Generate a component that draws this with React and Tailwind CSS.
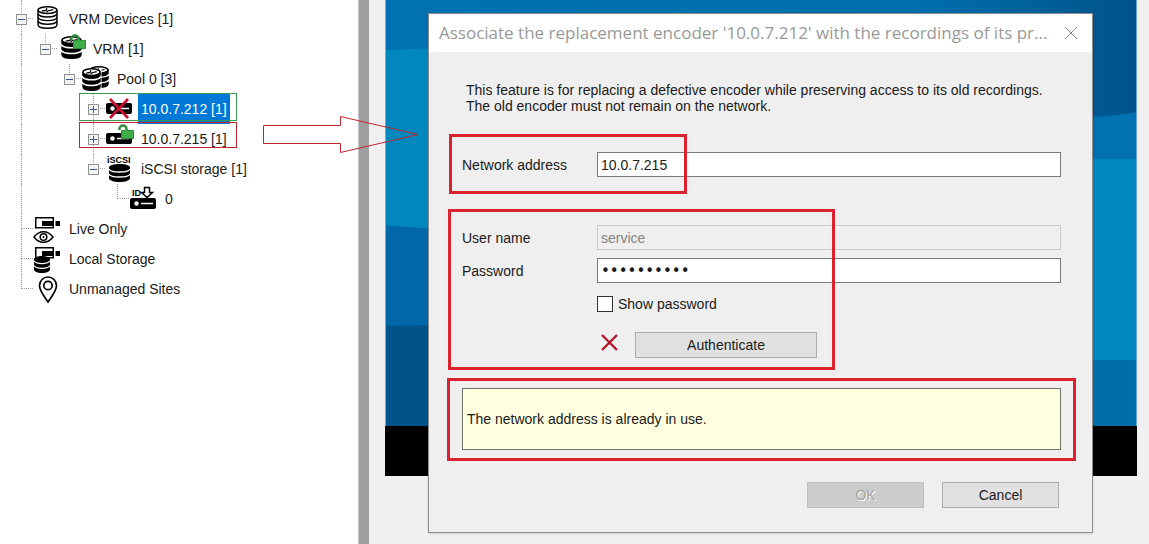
import React, { useState } from "react";

const Disks = ({ x, y, w = 20, h = 22, fill = "#000" }) => {
  const white = fill !== "#000";
  return (
    <svg x={x} y={y} width={w} height={h} viewBox="0 0 20 22" preserveAspectRatio="none">
      <path d="M1 4v14c0 2 4 3.300 9 3.300s9-1.300 9-3.300V4z" fill={fill} stroke="#000" strokeWidth="1.4" />
      {white ? (
        <path
          d="M1 7.500c1 2 4 3 9 3s8-1 9-3M1 11c1 2 4 3 9 3s8-1 9-3M1 14.500c1 2 4 3 9 3s8-1 9-3"
          fill="none"
          stroke="#000"
          strokeWidth="1.4"
        />
      ) : (
        <path
          d="M0 8c1 2.200 5 3.300 10 3.300S19 10.200 20 8M0 13.500c1 2.200 5 3.300 10 3.300s9-1.100 10-3.300"
          fill="none"
          stroke="#fff"
          strokeWidth="1.5"
        />
      )}
      <ellipse cx="10" cy="4" rx="9" ry="3.2" fill="#fff" stroke="#000" strokeWidth="1.5" />
      <path d="M4.500 5l4-.8 1-2M9 6l1.500-1.500 5-1" fill="none" stroke="#000" strokeWidth="1.2" />
    </svg>
  );
};

const SmallDisks = ({ x, y, w, h }) => (
  <svg x={x} y={y} width={w} height={h} viewBox="0 0 20 18" preserveAspectRatio="none">
    <path d="M0 3.500C0 1.500 4.500 0 10 0s10 1.500 10 3.500V14c0 2.500-4.500 4-10 4S0 16.500 0 14z" fill="#000" />
    <path
      d="M0 5c1 2 5 3 10 3s9-1 10-3M0 10c1 2 5 3 10 3s9-1 10-3"
      fill="none"
      stroke="#fff"
      strokeWidth="1.3"
    />
  </svg>
);

const Lock = ({ x, y }) => (
  <g transform={`translate(${x} ${y})`}>
    <path d="M1.500 6V4.500A3.500 3 0 0 1 8.500 4.500v3" fill="none" stroke="#2c8a3a" strokeWidth="2.4" />
    <path d="M3.500 6.500H7l1.500-1 1.500 1h5.500v8h-12z" fill="#3fae49" stroke="#2c8a3a" strokeWidth="1" />
  </g>
);

const Recorder = ({ x, y }) => (
  <g transform={`translate(${x} ${y})`}>
    <rect width="26" height="11" rx="2" fill="#000" />
    <circle cx="6.500" cy="5.500" r="2.200" fill="#fff" />
    <path d="M11 5.500h12" stroke="#fff" strokeWidth="1.5" />
  </g>
);

const Camera = () => (
  <g>
    <path d="M2.750 3.750h17.500v10H2.750z" fill="#fff" stroke="#000" strokeWidth="1.5" />
    <path d="M9 7h12v5H9zM22.500 7H27v5h-4.500z" fill="#000" />
  </g>
);

const icons = {
  devices: <Disks x={4} y={2} w={21} h={23} fill="#fff" />,
  vrm: (
    <>
      <Disks x={4} y={2} w={21} h={23} />
      <Lock x={13} y={0} />
    </>
  ),
  pool: (
    <>
      <Disks x={8} y={2} w={20} h={22} />
      <path d="M19.500 5v21" stroke="#fff" strokeWidth="2" />
      <Disks x={1} y={4} w={19} h={23} />
    </>
  ),
  lost: (
    <>
      <Recorder x={1} y={9} />
      <path d="M5 5l18 19M23 5L5 24" stroke="#c8102e" strokeWidth="2.7" />
    </>
  ),
  encoder: (
    <>
      <Recorder x={1} y={9} />
      <Lock x={13} y={0} />
    </>
  ),
  iscsi: (
    <>
      <text x="2" y="9" fontSize="9" fontWeight="bold">
        iSCSI
      </text>
      <SmallDisks x={4} y={10} w={21} h={18} />
    </>
  ),
  lun: (
    <>
      <text x="3" y="12" fontSize="9" fontWeight="bold">
        ID
      </text>
      <path d="M15.500 3.500h5v5h3L18 13.500l-5.500-5h3z" fill="#fff" stroke="#000" strokeWidth="1.5" />
      <Recorder x={1} y={14} />
    </>
  ),
  live: (
    <>
      <Camera />
      <path
        d="M1 23c3-4 6-5.300 9.500-5.300S17 19 20 23c-3 4-6 5.300-9.500 5.300S4 27 1 23z"
        fill="#fff"
        stroke="#000"
        strokeWidth="1.5"
      />
      <circle cx="10.500" cy="23" r="3.300" fill="none" stroke="#000" strokeWidth="1.500" />
      <circle cx="10.500" cy="23" r="1" fill="#000" />
    </>
  ),
  local: (
    <>
      <Camera />
      <SmallDisks x={1} y={12} w={16} h={17} />
    </>
  ),
  site: (
    <>
      <path
        d="M15 28C11 22 6.500 17 6.500 11.500a8.500 8.500 0 0 1 17 0C23.500 17 19 22 15 28z"
        fill="#fff"
        stroke="#000"
        strokeWidth="1.7"
      />
      <circle cx="15" cy="11.500" r="4.200" fill="#fff" stroke="#000" strokeWidth="1.700" />
    </>
  ),
};

// guides: one entry for each ancestor column, true where its line runs through
const nodes = [
  { label: "VRM Devices [1]", icon: "devices", guides: [], box: "-", down: true },
  { label: "VRM [1]", icon: "vrm", guides: [true], box: "-" },
  { label: "Pool 0 [3]", icon: "pool", guides: [true, false], box: "-" },
  { label: "10.0.7.212 [1]", icon: "lost", guides: [true, false, false], box: "+", down: true, mark: "green" },
  { label: "10.0.7.215 [1]", icon: "encoder", guides: [true, false, false], box: "+", down: true, mark: "red" },
  { label: "iSCSI storage [1]", icon: "iscsi", guides: [true, false, false], box: "-" },
  { label: "0", icon: "lun", guides: [true, false, false, false] },
  { label: "Live Only", icon: "live", guides: [], down: true },
  { label: "Local Storage", icon: "local", guides: [], down: true },
  { label: "Unmanaged Sites", icon: "site", guides: [] },
];

const Expander = ({ sign }) => (
  <button
    type="button"
    aria-label={sign === "+" ? "Expand" : "Collapse"}
    className="col-span-2 col-start-1 row-span-2 row-start-1 flex size-[11px] place-self-center border border-[#919191] bg-[#f3f3f3]"
  >
    <svg viewBox="0 0 9 9" className="size-[9px]">
      <path d={sign === "+" ? "M1 4.500h7M4.500 1v7" : "M1 4.500h7"} stroke="#3c5a96" strokeWidth="1" />
    </svg>
  </button>
);

const TreeRow = ({ node, selected, onSelect }) => {
  return (
    <li className="relative flex h-[30px] items-center pl-[9px]">
      {node.guides.map((line, i) => (
        <span key={i} className="h-full w-6 shrink-0 pl-3">
          {line && <span className="block h-full border-l border-dotted border-gray-400"></span>}
        </span>
      ))}
      <span className="grid h-full w-6 shrink-0 grid-cols-2 grid-rows-2">
        <span className="col-start-2 row-start-1 border-b border-l border-dotted border-gray-400"></span>
        {node.down && <span className="col-start-2 row-start-2 border-l border-dotted border-gray-400"></span>}
        {node.box && <Expander sign={node.box} />}
      </span>
      <svg viewBox="0 0 30 30" className="size-[30px] shrink-0 overflow-visible">
        {icons[node.icon]}
      </svg>
      <button
        type="button"
        onClick={onSelect}
        className={
          selected
            ? "ml-[3px] h-full bg-[#0078d7] px-[3px] whitespace-nowrap text-white"
            : "h-full px-1.5 whitespace-nowrap"
        }
      >
        {node.label}
      </button>
      {node.mark === "green" && (
        <span className="pointer-events-none absolute -top-px left-[79px] h-7 w-[158px] border border-[#3a9b52]"></span>
      )}
      {node.mark === "red" && (
        <span className="pointer-events-none absolute -top-0.5 left-[79px] h-[26px] w-[158px] border border-[#c1272d]"></span>
      )}
    </li>
  );
};

const Backdrop = () => (
  <svg viewBox="0 0 752 476" preserveAspectRatio="none" className="block h-[476px] w-full">
    <defs>
      <linearGradient id="top" x1="0" x2="1" y1="0" y2="0">
        <stop offset="0" stopColor="#0072b1" />
        <stop offset="0.7" stopColor="#006fae" />
        <stop offset="0.95" stopColor="#00588f" />
        <stop offset="1" stopColor="#00538a" />
      </linearGradient>
    </defs>
    <path d="M0 0h752v476H0z" fill="#0088be" />
    <path d="M0 0h400v36L0 50z" fill="#0072b1" />
    <path d="M400 0h352v160H400z" fill="#0072b1" />
    <path d="M0 0h752v112q-20 4-50 5L400 40 0 30z" fill="url(#top)" />
    <path d="M400 159h352v204H400z" fill="#0088be" />
    <path d="M0 225l60 5v100H0z" fill="#0067a8" />
    <path d="M0 326l60-1v105H0z" fill="#00548a" />
    <path d="M400 360h352v70H400z" fill="#006ea8" />
    <path d="M0 426h752v50H0z" fill="#000" />
    <path d="M.500 0v426" stroke="#6cb1dc" />
    <path d="M751.500 0v426" stroke="#6ca6cc" />
  </svg>
);

const Dialog = () => {
  const [show, setShow] = useState(false);

  return (
    <div
      role="dialog"
      aria-labelledby="dialog-title"
      className="absolute top-[13px] right-14 left-[59px] border border-[#8c8c8c] bg-[#efefef] shadow-sm"
    >
      <div className="flex h-[38px] items-center bg-white pr-3.5 pl-2.5">
        <h1 id="dialog-title" className="flex-1 truncate font-['Open_Sans',sans-serif] text-[17px] text-[#999]">
          Associate the replacement encoder '10.0.7.212' with the recordings of its pr...
        </h1>
        <button type="button" aria-label="Close">
          <svg viewBox="0 0 14 14" className="size-3.5">
            <path d="M1 1l12 12M13 1L1 13" stroke="#888" strokeWidth="1" />
          </svg>
        </button>
      </div>

      <form className="pt-[30px] pr-[31px] pb-6 pl-[33px]" onSubmit={(e) => e.preventDefault()}>
        <p className="pl-1 leading-4">
          This feature is for replacing a defective encoder while preserving access to its old recordings.
          <br />
          The old encoder must not remain on the network.
        </p>

        <div className="relative mt-[38px] flex items-center">
          <label htmlFor="address" className="w-[135px] shrink-0">
            Network address
          </label>
          <input
            id="address"
            defaultValue="10.0.7.215"
            className="h-[25px] min-w-0 flex-1 border border-[#7a7a7a] bg-white px-[3px]"
          />
          <div className="pointer-events-none absolute -top-[18px] -left-[13px] h-[60px] w-[238px] border-3 border-[#d9232e]"></div>
        </div>

        <div className="relative mt-12">
          <div className="flex items-center">
            <label htmlFor="user" className="w-[135px] shrink-0">
              User name
            </label>
            <input
              id="user"
              disabled
              defaultValue="service"
              className="h-[25px] min-w-0 flex-1 border border-[#cccccc] px-[3px] text-[#838383]"
            />
          </div>
          <div className="mt-2 flex items-center">
            <label htmlFor="password" className="w-[135px] shrink-0">
              Password
            </label>
            <input
              id="password"
              type={show ? "text" : "password"}
              defaultValue="servicepwd"
              className="h-[25px] min-w-0 flex-1 border border-[#7a7a7a] bg-white px-[3px] font-['DejaVu_Sans',sans-serif] text-[15px]"
            />
          </div>
          <div className="mt-[11px] ml-[135px] flex h-5 items-center gap-[5px]">
            <input
              id="show"
              type="checkbox"
              checked={show}
              onChange={() => setShow(!show)}
              className="size-4 appearance-none border border-[#333] bg-white checked:bg-[#0078d7]"
            />
            <label htmlFor="show">Show password</label>
          </div>
          <div className="mt-[18px] ml-[135px] flex gap-[17px] pl-1">
            <svg viewBox="0 0 17 17" className="mt-0.5 size-[17px]">
              <path d="M1 1l15 15M16 1L1 16" stroke="#b5152b" strokeWidth="2.4" />
            </svg>
            <button type="button" className="h-[26px] w-[182px] border border-[#adadad] bg-[#e1e1e1]">
              Authenticate
            </button>
          </div>
          <div className="pointer-events-none absolute -top-4 -left-[14px] h-[161px] w-[387px] border-3 border-[#d9232e]"></div>
        </div>

        <div className="relative mt-[30px]">
          <p className="flex h-[62px] items-center border border-[#73736c] bg-[#ffffe1] px-1">
            The network address is already in use.
          </p>
          <div className="pointer-events-none absolute -top-2.5 -right-[15px] -bottom-[11px] -left-[15px] border-3 border-[#d9232e]"></div>
        </div>

        <div className="mt-8 flex justify-end gap-[18px] pr-0.5">
          <button
            type="submit"
            disabled
            className="h-[26px] w-[117px] border border-[#bfbfbf] bg-[#cccccc] text-[#a3a3a3] [text-shadow:1px_1px_0_#fff]"
          >
            OK
          </button>
          <button type="button" className="h-[26px] w-[117px] border border-[#adadad] bg-[#e1e1e1]">
            Cancel
          </button>
        </div>
      </form>
    </div>
  );
};

const App = () => {
  const [selected, setSelected] = useState("10.0.7.212 [1]");

  return (
    <div className="relative flex min-h-screen bg-white font-['Liberation_Sans',Arial,sans-serif] text-sm text-[#1a1a1a]">
      <nav className="w-[358px] shrink-0">
        <div className="h-1 pl-[21px]">
          <span className="block h-full border-l border-dotted border-gray-400"></span>
        </div>
        <ul>
          {nodes.map((node) => (
            <TreeRow
              key={node.label}
              node={node}
              selected={node.label === selected}
              onSelect={() => setSelected(node.label)}
            />
          ))}
        </ul>
      </nav>
      <div className="w-[11px] shrink-0 border-l border-[#c4c8cc] bg-[#9f9f9f]"></div>

      <main className="relative min-w-0 flex-1 bg-[#f0f0f3] pr-3 pl-4">
        <Backdrop />
        <Dialog />
      </main>

      {/* arrow from the two encoders to the dialog */}
      <svg
        viewBox="0 0 157 38"
        className="pointer-events-none absolute top-[115px] left-[263px] h-[38px] w-[157px]"
      >
        <path
          d="M.500 10.500H77.500V1.500L155 19.500 77.500 37.500V28.500H.500z"
          fill="none"
          stroke="#c1272d"
          strokeWidth="1"
        />
      </svg>
    </div>
  );
};

export default App;
